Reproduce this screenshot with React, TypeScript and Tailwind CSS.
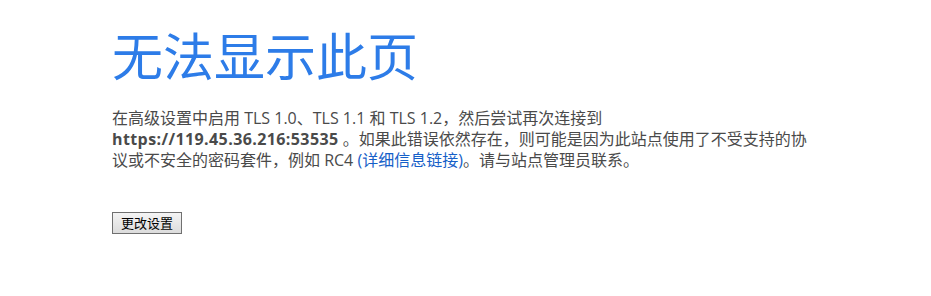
import React from "react";

export default function App() {
  return (
    <div className="w-[931px] h-[296px] bg-white overflow-hidden" style={{ fontFamily: '"Open Sans", "Noto Sans CJK SC", sans-serif' }}>
      <div className="pl-[112px] pt-[22px]">
        <h1 className="text-[51px] leading-[64px] text-[#2d7ce8] font-normal" style={{ fontFamily: '"Noto Sans CJK SC", sans-serif' }}>
          无法显示此页
        </h1>
        <div className="mt-[22px] text-[16px] leading-[21px] text-[#4a4a4a] whitespace-nowrap">
          <div>在高级设置中启用 TLS 1.0、TLS 1.1 和 TLS 1.2，然后尝试再次连接到</div>
          <div>
            <span className="font-bold tracking-[0.4px]">https://119.45.36.216:53535</span> 。如果此错误依然存在，则可能是因为此站点使用了不受支持的协
          </div>
          <div>
            议或不安全的密码套件，例如 RC4 <span className="text-[#1660c8]">(详细信息链接)</span>。请与站点管理员联系。
          </div>
        </div>
        <button className="mt-[41px] w-[70px] h-[22px] border border-[#707070] bg-gradient-to-b from-[#f4f4f4] to-[#dcdcdc] text-[13px] leading-[18px] text-black" style={{ fontFamily: '"Noto Sans CJK SC", sans-serif' }}>
          更改设置
        </button>
      </div>
    </div>
  );
}
